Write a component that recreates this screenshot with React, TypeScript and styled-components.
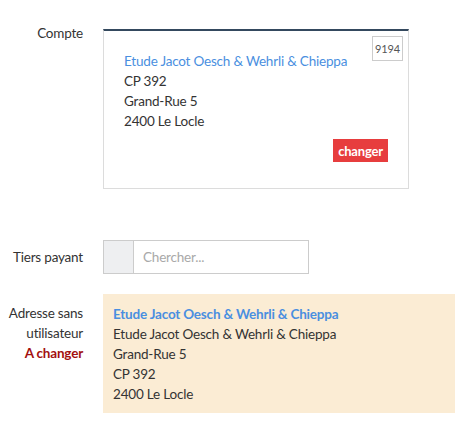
import React from "react";
import styled, { createGlobalStyle } from "styled-components";

const Global = createGlobalStyle`
  html, body { margin: 0; padding: 0; background: #fff; }
  body { font-family: Lato, "Open Sans", sans-serif; font-size: 13.5px; letter-spacing: -0.2px; color: #333; }
  * { box-sizing: border-box; }
`;

const Form = styled.div`
  display: flex;
  flex-direction: column;
  padding-top: 23px;
  width: 468px;
`;

const Row = styled.div<{ $center?: boolean; $mt?: number }>`
  display: grid;
  grid-template-columns: 83px auto;
  column-gap: 20px;
  align-items: ${(p) => (p.$center ? "center" : "start")};
  margin-top: ${(p) => p.$mt ?? 0}px;
`;

const Label = styled.div<{ $pt?: number }>`
  text-align: right;
  line-height: 20px;
  padding-top: ${(p) => p.$pt ?? 0}px;
`;

const Warn = styled.span`
  color: #a3100f;
  font-weight: bold;
`;

const Card = styled.div`
  position: relative;
  margin-top: 6px;
  width: 306px;
  border: 1px solid #dcdcdc;
  border-top: 2px solid #34495e;
  padding: 20px 20px 26px 20px;
  display: flex;
  flex-direction: column;
`;

const Line = styled.div<{ $link?: boolean; $bold?: boolean }>`
  line-height: 20px;
  color: ${(p) => (p.$link ? "#4a8fe0" : "#333")};
  font-weight: ${(p) => (p.$bold ? "bold" : "normal")};
  white-space: nowrap;
`;

const Badge = styled.div`
  position: absolute;
  top: 5px;
  right: 5px;
  width: 31px;
  height: 25px;
  border: 1px solid #ccc;
  font-size: 11px;
  letter-spacing: -0.1px;
  color: #555;
  display: flex;
  align-items: center;
  justify-content: center;
`;

const ChangeButton = styled.button`
  align-self: flex-end;
  margin-top: 8px;
  height: 23px;
  width: 55px;
  border: none;
  background: #e73d3e;
  color: #fff;
  font-family: inherit;
  font-weight: bold;
  font-size: 13px;
  letter-spacing: -0.2px;
  padding: 0;
`;

const InputGroup = styled.div`
  display: flex;
  width: 206px;
  height: 34px;
  border: 1px solid #ccc;
`;

const Addon = styled.div`
  width: 30px;
  background: #eeeff1;
  border-right: 1px solid #ccc;
`;

const SearchInput = styled.input`
  flex: 1;
  min-width: 0;
  border: none;
  outline: none;
  padding: 0 9px;
  font-family: inherit;
  font-size: 13.5px;
  letter-spacing: -0.2px;
  color: #333;
  &::placeholder { color: #a9a9a9; }
`;

const Notice = styled.div`
  width: 352px;
  background: #fbecd4;
  padding: 10px 10px 9px;
`;

export default function App() {
  return (
    <>
      <Global />
      <Form>
        <Row>
          <Label>Compte</Label>
          <Card>
            <Badge>9194</Badge>
            <Line $link>Etude Jacot Oesch &amp; Wehrli &amp; Chieppa</Line>
            <Line>CP 392</Line>
            <Line>Grand-Rue 5</Line>
            <Line>2400 Le Locle</Line>
            <ChangeButton>changer</ChangeButton>
          </Card>
        </Row>
        <Row $center $mt={51}>
          <Label>Tiers payant</Label>
          <InputGroup>
            <Addon />
            <SearchInput placeholder="Chercher..." />
          </InputGroup>
        </Row>
        <Row $mt={20}>
          <Label $pt={9}>
            Adresse sans
            <br />
            utilisateur
            <br />
            <Warn>A changer</Warn>
          </Label>
          <Notice>
            <Line $link $bold>Etude Jacot Oesch &amp; Wehrli &amp; Chieppa</Line>
            <Line>Etude Jacot Oesch &amp; Wehrli &amp; Chieppa</Line>
            <Line>Grand-Rue 5</Line>
            <Line>CP 392</Line>
            <Line>2400 Le Locle</Line>
          </Notice>
        </Row>
      </Form>
    </>
  );
}
